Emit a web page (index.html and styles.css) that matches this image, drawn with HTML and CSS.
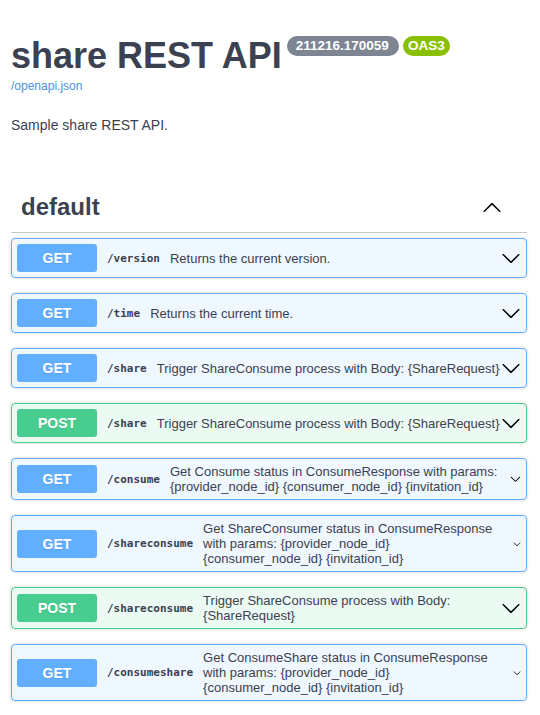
FILE: index.html
```html
<!DOCTYPE html>
<html lang="en">
<head>
<meta charset="utf-8">
<title>share REST API</title>
<link rel="stylesheet" href="styles.css">
</head>
<body>
<div class="page">
  <header class="info">
    <h2 class="title">
      <span class="title-text">share REST API</span>
      <span class="badge badge-version">211216.170059</span>
      <span class="badge badge-oas">OAS3</span>
    </h2>
    <a class="spec-link" href="#">/openapi.json</a>
    <p class="description">Sample share REST API.</p>
  </header>

  <section class="tag-section">
    <h3 class="tag">
      <span class="tag-name">default</span>
      <svg class="tag-arrow" width="20" height="20" viewBox="0 0 20 20"><path d="M17.418 14.908c.272.268.709.268.979 0s.271-.701 0-.969l-7.908-7.83c-.27-.268-.707-.268-.979 0l-7.908 7.83c-.27.268-.27.701 0 .969.271.268.709.268.979 0L10 7.767l7.418 7.141z"/></svg>
    </h3>

    <div class="opblock opblock-get">
      <div class="summary">
        <span class="method">GET</span>
        <span class="path">/version</span>
        <div class="summary-desc">Returns the current version.</div>
        <svg class="arrow" width="20" height="20" viewBox="0 0 20 20"><path d="M17.418 6.109c.272-.268.709-.268.979 0s.271.701 0 .969l-7.908 7.83c-.27.268-.707.268-.979 0l-7.908-7.830c-.27-.268-.27-.701 0-.969.271-.268.709-.268.979 0L10 13.25l7.418-7.141z"/></svg>
      </div>
    </div>

    <div class="opblock opblock-get">
      <div class="summary">
        <span class="method">GET</span>
        <span class="path">/time</span>
        <div class="summary-desc">Returns the current time.</div>
        <svg class="arrow" width="20" height="20" viewBox="0 0 20 20"><path d="M17.418 6.109c.272-.268.709-.268.979 0s.271.701 0 .969l-7.908 7.83c-.27.268-.707.268-.979 0l-7.908-7.83c-.27-.268-.27-.701 0-.969.271-.268.709-.268.979 0L10 13.25l7.418-7.141z"/></svg>
      </div>
    </div>

    <div class="opblock opblock-get">
      <div class="summary">
        <span class="method">GET</span>
        <span class="path">/share</span>
        <div class="summary-desc">Trigger ShareConsume process with Body: {ShareRequest}</div>
        <svg class="arrow" width="20" height="20" viewBox="0 0 20 20"><path d="M17.418 6.109c.272-.268.709-.268.979 0s.271.701 0 .969l-7.908 7.83c-.27.268-.707.268-.979 0l-7.908-7.83c-.27-.268-.27-.701 0-.969.271-.268.709-.268.979 0L10 13.25l7.418-7.141z"/></svg>
      </div>
    </div>

    <div class="opblock opblock-post">
      <div class="summary">
        <span class="method">POST</span>
        <span class="path">/share</span>
        <div class="summary-desc">Trigger ShareConsume process with Body: {ShareRequest}</div>
        <svg class="arrow" width="20" height="20" viewBox="0 0 20 20"><path d="M17.418 6.109c.272-.268.709-.268.979 0s.271.701 0 .969l-7.908 7.83c-.27.268-.707.268-.979 0l-7.908-7.83c-.27-.268-.27-.701 0-.969.271-.268.709-.268.979 0L10 13.25l7.418-7.141z"/></svg>
      </div>
    </div>

    <div class="opblock opblock-get">
      <div class="summary">
        <span class="method">GET</span>
        <span class="path">/consume</span>
        <div class="summary-desc">Get Consume status in ConsumeResponse with params: {provider_node_id} {consumer_node_id} {invitation_id}</div>
        <svg class="arrow arrow-sm" width="11" height="20" viewBox="0 0 20 20"><path d="M17.418 6.109c.272-.268.709-.268.979 0s.271.701 0 .969l-7.908 7.83c-.27.268-.707.268-.979 0l-7.908-7.83c-.27-.268-.27-.701 0-.969.271-.268.709-.268.979 0L10 13.25l7.418-7.141z"/></svg>
      </div>
    </div>

    <div class="opblock opblock-get">
      <div class="summary">
        <span class="method">GET</span>
        <span class="path">/shareconsume</span>
        <div class="summary-desc">Get ShareConsumer status in ConsumeResponse with params: {provider_node_id} {consumer_node_id} {invitation_id}</div>
        <svg class="arrow arrow-xs" width="8" height="20" viewBox="0 0 20 20"><path d="M17.418 6.109c.272-.268.709-.268.979 0s.271.701 0 .969l-7.908 7.83c-.27.268-.707.268-.979 0l-7.908-7.83c-.27-.268-.27-.701 0-.969.271-.268.709-.268.979 0L10 13.25l7.418-7.141z"/></svg>
      </div>
    </div>

    <div class="opblock opblock-post">
      <div class="summary">
        <span class="method">POST</span>
        <span class="path">/shareconsume</span>
        <div class="summary-desc">Trigger ShareConsume process with Body: {ShareRequest}</div>
        <svg class="arrow" width="20" height="20" viewBox="0 0 20 20"><path d="M17.418 6.109c.272-.268.709-.268.979 0s.271.701 0 .969l-7.908 7.83c-.27.268-.707.268-.979 0l-7.908-7.83c-.27-.268-.27-.701 0-.969.271-.268.709-.268.979 0L10 13.25l7.418-7.141z"/></svg>
      </div>
    </div>

    <div class="opblock opblock-get">
      <div class="summary">
        <span class="method">GET</span>
        <span class="path">/consumeshare</span>
        <div class="summary-desc">Get ConsumeShare status in ConsumeResponse with params: {provider_node_id} {consumer_node_id} {invitation_id}</div>
        <svg class="arrow arrow-xs" width="8" height="20" viewBox="0 0 20 20"><path d="M17.418 6.109c.272-.268.709-.268.979 0s.271.701 0 .969l-7.908 7.83c-.27.268-.707.268-.979 0l-7.908-7.83c-.27-.268-.27-.701 0-.969.271-.268.709-.268.979 0L10 13.25l7.418-7.141z"/></svg>
      </div>
    </div>
  </section>
</div>
</body>
</html>
```

FILE: styles.css
```css
html, body {
  margin: 0;
  padding: 0;
  background: #fff;
}

body {
  font-family: "Liberation Sans", Arial, sans-serif;
  color: #3b4151;
}

.page {
  padding: 0 13px 0 11px;
}

/* ---------- info header ---------- */
.info {
  padding-top: 34px;
}

.title {
  display: flex;
  align-items: flex-start;
  margin: 0;
  font-size: 36px;
  line-height: 44px;
  font-weight: 700;
  color: #3b4151;
}

.badge {
  margin-top: 2px;
  margin-left: 5px;
  height: 20px;
  line-height: 20px;
  border-radius: 57px;
  color: #fff;
  font-size: 13.5px;
  font-weight: 700;
}

.badge-version {
  background: #7d8492;
  padding: 0 10px 0 9px;
}

.badge-oas {
  background: #89bf04;
  margin-left: 4px;
  padding: 0 5px;
}

.spec-link {
  display: block;
  margin-top: 1px;
  font-size: 12px;
  line-height: 15px;
  color: #4990e2;
  text-decoration: none;
}

.description {
  margin: 23px 0 0;
  font-size: 14px;
  line-height: 16px;
  color: #3b4151;
}

/* ---------- tag section ---------- */
.tag-section {
  margin-top: 51px;
}

.tag {
  display: flex;
  align-items: center;
  margin: 0 0 5px;
  padding: 9px 25px 11px 10px;
  border-bottom: 1px solid rgba(59, 65, 81, 0.3);
  font-size: 24px;
  line-height: 28px;
  font-weight: 700;
  color: #3b4151;
}

.tag-name {
  flex: 1;
}

.tag-arrow {
  flex: none;
  fill: #000;
}

/* ---------- operations ---------- */
.opblock {
  margin: 0 0 15px;
  border: 1px solid #000;
  border-radius: 4px;
  box-shadow: 0 0 3px rgba(0, 0, 0, 0.19);
}

.opblock-get {
  background: rgba(97, 175, 254, 0.1);
  border-color: #61affe;
}

.opblock-post {
  background: rgba(73, 204, 144, 0.1);
  border-color: #49cc90;
}

.summary {
  display: flex;
  align-items: center;
  padding: 5px;
}

.method {
  flex: none;
  width: 80px;
  padding: 6px 0;
  border-radius: 3px;
  font-size: 14px;
  line-height: 16px;
  font-weight: 700;
  text-align: center;
  color: #fff;
  text-shadow: 0 1px 0 rgba(0, 0, 0, 0.1);
}

.opblock-get .method {
  background: #61affe;
}

.opblock-post .method {
  background: #49cc90;
}

.path {
  flex: none;
  padding: 0 10px;
  font-family: "DejaVu Sans Mono", "Liberation Mono", monospace;
  font-size: 11px;
  font-weight: 600;
  color: #3b4151;
  white-space: nowrap;
}

.summary-desc {
  flex: 1 1 0;
  min-width: 0;
  font-size: 13px;
  line-height: 15px;
  color: #3b4151;
  word-break: break-word;
}

.arrow {
  flex: none;
  height: 20px;
  width: 20px;
  fill: #000;
}

.arrow-sm {
  width: 11px;
}

.arrow-xs {
  width: 8px;
  margin-left: 8px;
}
```
